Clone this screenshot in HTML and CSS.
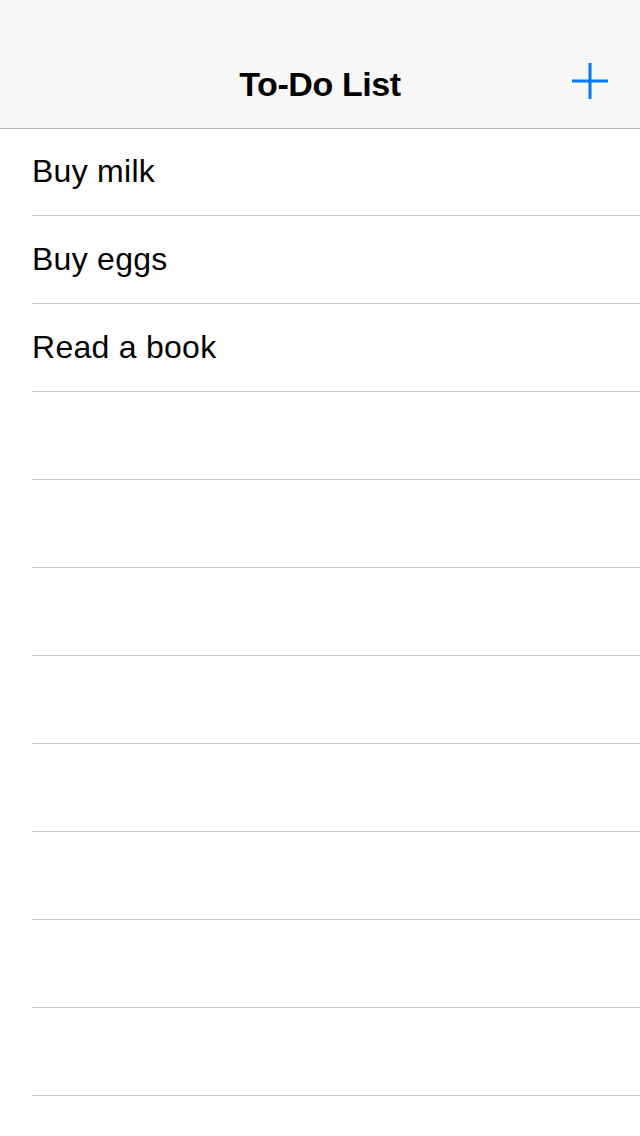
FILE: index.html
```html
<!DOCTYPE html>
<html>
<head>
<meta charset="utf-8">
<link rel="stylesheet" href="styles.css">
</head>
<body>
<div class="screen">
  <header class="navbar">
    <div class="status"></div>
    <div class="bar">
      <h1 class="title">To-Do List</h1>
      <button class="add" aria-label="Add">
        <svg width="36" height="36" viewBox="0 0 36 36"><path d="M18 0V36M0 18H36" stroke="#007aff" stroke-width="3" fill="none"/></svg>
      </button>
    </div>
  </header>
  <ul class="list">
    <li class="row">Buy milk</li>
    <li class="row">Buy eggs</li>
    <li class="row">Read a book</li>
    <li class="row"></li>
    <li class="row"></li>
    <li class="row"></li>
    <li class="row"></li>
    <li class="row"></li>
    <li class="row"></li>
    <li class="row"></li>
    <li class="row"></li>
    <li class="row"></li>
  </ul>
</div>
</body>
</html>
```
FILE: styles.css
```css
html, body {
  margin: 0;
  padding: 0;
  background: #fff;
}
.screen {
  width: 640px;
  height: 1136px;
  overflow: hidden;
  font-family: "Liberation Sans", Arial, sans-serif;
  color: #000;
}
.navbar {
  background: #f7f7f7;
  border-bottom: 1px solid #b2b2b2;
}
.status {
  height: 40px;
}
.bar {
  height: 88px;
  display: flex;
  align-items: center;
  justify-content: center;
  position: relative;
}
.title {
  margin: 0;
  font-size: 34px;
  font-weight: bold;
  letter-spacing: -0.4px;
}
.add {
  position: absolute;
  right: 32px;
  top: 23px;
  width: 36px;
  height: 36px;
  padding: 0;
  border: 0;
  background: none;
  display: flex;
}
.list {
  list-style: none;
  margin: 0;
  padding: 0 0 0 32px;
}
.row {
  height: 87px;
  border-bottom: 1px solid #c8c7cc;
  display: flex;
  align-items: center;
  font-size: 32px;
  letter-spacing: 0.27px;
  padding-bottom: 1px;
  box-sizing: border-box;
}
.row:first-child {
  height: 87px;
}
.row:not(:first-child) {
  height: 88px;
}
```
